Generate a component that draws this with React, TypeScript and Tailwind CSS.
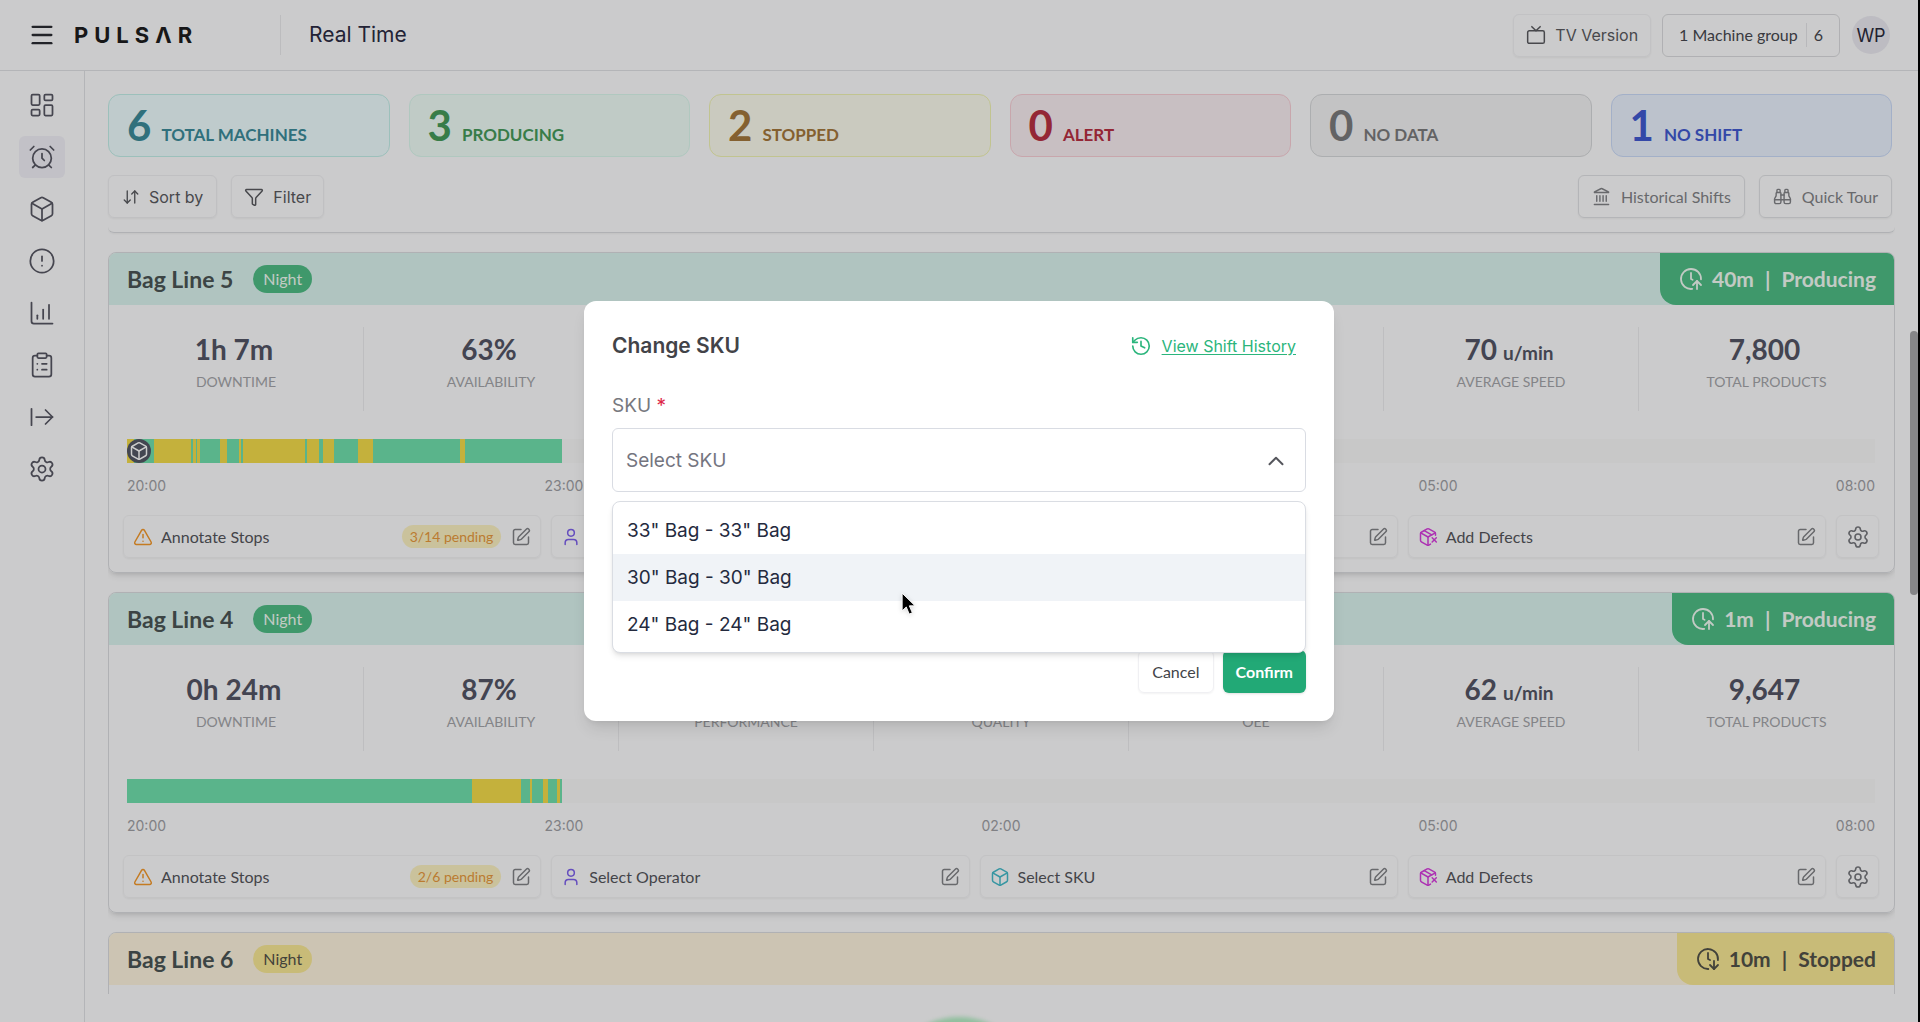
import {
    AlarmClock,
    ArrowDownUp,
    ArrowRightFromLine,
    Binoculars,
    Box,
    ChartColumnIncreasing,
    ChevronUp,
    CircleAlert,
    ClipboardList,
    ClockArrowDown,
    ClockArrowUp,
    Funnel,
    History,
    Landmark,
    LayoutDashboard,
    Menu,
    PackageX,
    Settings,
    SquarePen,
    TriangleAlert,
    Tv,
    User,
} from "lucide-react";

const inter = "font-['Inter',sans-serif]";

const navItems = [
    { label: "Dashboard", icon: LayoutDashboard },
    { label: "Real Time", icon: AlarmClock, active: true },
    { label: "Products", icon: Box },
    { label: "Alerts", icon: CircleAlert },
    { label: "Reports", icon: ChartColumnIncreasing },
    { label: "Tasks", icon: ClipboardList },
    { label: "Export", icon: ArrowRightFromLine },
    { label: "Settings", icon: Settings },
];

const totals = [
    { value: 6, label: "TOTAL MACHINES", style: "bg-[#effeff] border-[#c4f0ea] text-[#3c8d9b]" },
    { value: 3, label: "PRODUCING", style: "bg-[#f0fef8] border-[#dcfaef] text-[#469c5b]" },
    { value: 2, label: "STOPPED", style: "bg-[#fdfdef] border-[#f2f5b4] text-[#a6783c]" },
    { value: 0, label: "ALERT", style: "bg-[#fbeff3] border-[#fbd0d8] text-[#b93043]" },
    { value: 0, label: "NO DATA", style: "bg-[#f4f4f5] border-[#d8dadc] text-[#7c7c7e]" },
    { value: 1, label: "NO SHIFT", style: "bg-[#ebf3ff] border-[#ccdcfb] text-[#425ad2]" },
];

// [color, width], g = running, y = stopped. Full shift is 1748 wide
const SHIFT = 1748;

const machines: any[] = [
    {
        name: "Bag Line 5",
        time: "40m",
        status: "Producing",
        metrics: ["1h 7m", "63%", "71%", "100%", "45%", "70", "7,800"],
        pending: "3/14 pending",
        marker: true,
        segments: [
            ["y", 7], ["g", 20], ["y", 37], ["g", 2], ["y", 3], ["g", 1], ["y", 3], ["g", 20], ["y", 7], ["g", 12],
            ["y", 2], ["g", 2], ["y", 62], ["g", 2], ["y", 12], ["g", 4], ["y", 11], ["g", 24], ["y", 15], ["g", 87],
            ["y", 5], ["g", 97],
        ],
    },
    {
        name: "Bag Line 4",
        time: "1m",
        status: "Producing",
        metrics: ["0h 24m", "87%", "69%", "100%", "60%", "62", "9,647"],
        pending: "2/6 pending",
        segments: [["g", 345], ["y", 49], ["g", 9], ["y", 2], ["g", 11], ["y", 5], ["g", 9], ["y", 3], ["g", 2]],
    },
    {
        name: "Bag Line 6",
        time: "10m",
        status: "Stopped",
        metrics: ["1h 2m", "65%", "70%", "100%", "46%", "0", "6,120"],
        pending: "4/9 pending",
        segments: [["g", 400], ["y", 35]],
    },
];

const metricLabels = ["DOWNTIME", "AVAILABILITY", "PERFORMANCE", "QUALITY", "OEE", "AVERAGE SPEED", "TOTAL PRODUCTS"];

const actions = [
    { label: "Annotate Stops", icon: TriangleAlert, color: "text-[#f59a2c]" },
    { label: "Select Operator", icon: User, color: "text-[#7f62ee]" },
    { label: "Select SKU", icon: Box, color: "text-[#45bccb]" },
    { label: "Add Defects", icon: PackageX, color: "text-[#d93fe0]" },
];

const skus = ['33" Bag - 33" Bag', '30" Bag - 30" Bag', '24" Bag - 24" Bag'];

const Header = () => {
    return (
        <header className="flex h-[71px] shrink-0 items-center border-b border-[#e2e3e6] pl-[28px] pr-[28px]">
            <button aria-label="Menu" className="text-[#2b2c33]">
                <Menu size={28} strokeWidth={2} />
            </button>
            <span className="ml-[18px] w-[207px] border-r border-[#ececee] py-1 font-['Inter',sans-serif] text-[22px] font-bold leading-8 tracking-[6px] text-[#1d1d20]">
                PULSΛR
            </span>
            <h1 className={`ml-[28px] text-[21px] text-[#2c2c44] ${inter}`}>Real Time</h1>
            <div className="ml-auto flex items-center">
                <button className="flex h-[43px] items-center gap-[9px] rounded-md border border-[#f3f3f5] px-[12px] text-[16px] text-[#5a5b60] shadow-xs">
                    <Tv size={20} strokeWidth={1.8} />
                    <span className={inter}>TV Version</span>
                </button>
                <button className="ml-[11px] flex h-[43px] items-center rounded-md border border-[#dcdde0] px-[16px] text-[16px] text-[#48494f]">
                    1 Machine group
                    <span className="ml-[8px] border-l border-[#e6e6ea] pl-[7px]">6</span>
                </button>
                <span className={`ml-[12px] flex size-[38px] items-center justify-center rounded-full bg-[#edecf3] text-[18px] text-[#2a2a3c] ${inter}`}>
                    WP
                </span>
            </div>
        </header>
    );
};

const Sidebar = () => {
    return (
        <nav className="flex w-[85px] shrink-0 flex-col items-center gap-[10px] border-r border-[#e2e3e6] pt-[13px]">
            {navItems.map(({ label, icon: Icon, active }) => (
                <a
                    key={label}
                    href="#"
                    aria-label={label}
                    className={`flex h-[42px] w-[46px] items-center justify-center rounded-md text-[#585864] ${active ? "bg-[#f3f2f9]" : ""}`}
                >
                    <Icon size={28} strokeWidth={1.5} />
                </a>
            ))}
        </nav>
    );
};

const Timeline = ({ segments, marker }: any) => {
    return (
        <div className="pl-[18px] pr-[19px]">
            <div className="relative flex h-[24px] bg-[#fafafa]">
                {segments.map(([color, width]: any, i: number) => (
                    <div
                        key={i}
                        className={color === "g" ? "bg-[#71e1ae]" : "bg-[#f6de4b]"}
                        style={{ width: `${(width / SHIFT) * 100}%` }}
                    />
                ))}
                {marker && (
                    <span className="absolute left-0 top-0 flex size-[24px] items-center justify-center rounded-full bg-[#545866] text-white">
                        <Box size={20} strokeWidth={1.8} />
                    </span>
                )}
            </div>
            <div className={`mt-[13px] grid grid-cols-8 text-[14px] leading-5 text-[#a0a1a6] ${inter}`}>
                <span>20:00</span>
                <span className="col-span-2 text-center">23:00</span>
                <span className="col-span-2 text-center">02:00</span>
                <span className="col-span-2 text-center">05:00</span>
                <span className="text-right">08:00</span>
            </div>
        </div>
    );
};

const MachineCard = ({ machine }: any) => {
    const stopped = machine.status === "Stopped";
    const Clock = stopped ? ClockArrowDown : ClockArrowUp;
    const solid = stopped ? "bg-[#fbea96] text-[#53534a]" : "bg-[#4fbf86] text-[#f3fdf6]";

    return (
        <section className="h-[321px] shrink-0 overflow-hidden rounded-lg border border-[#dcdee2] shadow-md">
            <div className={`flex h-[52px] items-center pl-[18px] ${stopped ? "bg-[#fff6e0]" : "bg-[#ddf5f0]"}`}>
                <h2 className="text-[23px] font-bold text-[#4b5555]">{machine.name}</h2>
                <span className={`ml-[20px] flex h-[28px] items-center rounded-full px-[10px] text-[16px] ${solid}`}>Night</span>
                <div className={`ml-auto flex h-full items-center rounded-bl-2xl pl-[19px] pr-[18px] text-[21px] font-bold ${solid}`}>
                    <Clock size={24} strokeWidth={1.8} />
                    <span className="ml-[9px]">{machine.time}</span>
                    <span className="mx-[11px]">|</span>
                    <span>{machine.status}</span>
                </div>
            </div>
            <div className="mt-[22px] grid h-[84px] grid-cols-7 divide-x divide-[#eeeef1]">
                {metricLabels.map((label, i) => (
                    <div key={label} className="flex flex-col items-center pt-[4px]">
                        <p className="h-9 pr-1 text-[28px] font-bold leading-9 text-[#545666]">
                            {machine.metrics[i]}
                            {label === "AVERAGE SPEED" && <span className="ml-[6px] text-[19px]">u/min</span>}
                        </p>
                        <p className="mt-[5px] text-[14px] leading-5 text-[#a5a6aa]">{label}</p>
                    </div>
                ))}
            </div>
            <div className="mt-[28px]">
                <Timeline segments={machine.segments} marker={machine.marker} />
            </div>
            <div className="mt-[19px] flex gap-[10px] pl-[14px] pr-[15px]">
                {actions.map(({ label, icon: Icon, color }, i) => (
                    <button
                        key={label}
                        className="flex h-[43px] flex-1 items-center rounded-md border border-[#f4f4f6] px-[9px] text-[16px] text-[#55565c] shadow-xs"
                    >
                        <Icon size={20} strokeWidth={1.8} className={color} />
                        <span className="ml-[8px]">{label}</span>
                        {i === 0 && (
                            <span className="ml-auto rounded-full bg-[#fdf3c4] px-[8px] text-[14px] leading-[23px] text-[#ea9a3c]">
                                {machine.pending}
                            </span>
                        )}
                        <SquarePen size={20} strokeWidth={1.8} className={`text-[#838488] ${i === 0 ? "ml-[10px]" : "ml-auto"}`} />
                    </button>
                ))}
                <button
                    aria-label="Machine settings"
                    className="flex size-[43px] items-center justify-center rounded-md border border-[#f4f4f6] text-[#77787e] shadow-xs"
                >
                    <Settings size={24} strokeWidth={1.6} />
                </button>
            </div>
        </section>
    );
};

const ChangeSkuModal = () => {
    return (
        <div className="absolute inset-0 flex items-center justify-center bg-black/20">
            <div
                role="dialog"
                aria-labelledby="sku-title"
                className={`relative w-[750px] max-w-full rounded-xl bg-white px-[28px] pb-[28px] pt-[29px] shadow-lg ${inter}`}
            >
                <div className="flex items-center justify-between pr-[10px]">
                    <h2 id="sku-title" className="text-[21px] font-semibold leading-8 text-[#424348]">Change SKU</h2>
                    <a href="#" className="flex items-center gap-[10px] text-[16px] text-[#2bb57c]">
                        <History size={22} strokeWidth={1.8} />
                        <span className="underline underline-offset-2">View Shift History</span>
                    </a>
                </div>
                <label htmlFor="sku" className="mt-8 block text-[19px] leading-6 text-[#77787e]">
                    SKU <span className="text-[#dd2647]">*</span>
                </label>
                <div className="relative mt-[10px]">
                    <select
                        id="sku"
                        defaultValue=""
                        className="h-[64px] w-full appearance-none rounded-md border border-[#d9dce3] bg-white px-[13px] pt-[2px] text-[19px] text-[#74757f]"
                    >
                        <option value="">Select SKU</option>
                        {skus.map((sku) => (
                            <option key={sku}>{sku}</option>
                        ))}
                    </select>
                    <ChevronUp size={26} strokeWidth={1.8} className="pointer-events-none absolute right-[17px] top-[20px] text-[#55565c]" />
                    <ul
                        role="listbox"
                        className="absolute inset-x-0 top-[73px] rounded-lg border border-[#dadde3] bg-white pb-[4px] pt-[5px] text-[19px] leading-[47px] text-[#242a3e] shadow-md"
                    >
                        {skus.map((sku, i) => (
                            <li key={sku} role="option" aria-selected={i === 1} className={`px-[14px] ${i === 1 ? "bg-[#f0f3f7]" : ""}`}>
                                {sku}
                            </li>
                        ))}
                    </ul>
                </div>
                <div className="mt-[158px] flex justify-end gap-[9px] font-['Lato',sans-serif] text-[16px]">
                    <button className="h-[43px] rounded-md border border-[#f0f0f3] px-[13px] text-[#424348] shadow-xs">Cancel</button>
                    <button className="h-[43px] rounded-md bg-[#22a976] px-[13px] font-bold text-white shadow-sm">Confirm</button>
                </div>
                {/* mouse pointer */}
                <svg viewBox="0 0 14 21" className="absolute left-[317px] top-[291px] h-[24px] w-[16px] drop-shadow-sm">
                    <path d="M1 1v15.5l3.6-3.4 2.6 6.2 2.7-1.1-2.6-6.1h5z" fill="#000" stroke="#fff" strokeWidth="0.8" />
                </svg>
            </div>
        </div>
    );
};

const App = () => {
    return (
        <div className="relative flex h-screen flex-col overflow-hidden border-r-2 border-black bg-[#fefeff] font-['Lato',sans-serif]">
            <Header />
            <div className="flex min-h-0 flex-1">
                <Sidebar />
                <main className="flex min-w-0 flex-1 flex-col pb-[28px] pl-[23px]">
                    <div className="mr-[26px] mt-[23px] grid grid-cols-6 gap-[19px]">
                        {totals.map(({ value, label, style }) => (
                            <div key={label} className={`flex h-[63px] items-baseline gap-[10px] rounded-xl border px-[18px] font-bold ${style}`}>
                                <span className="text-[42px] leading-[60px]">{value}</span>
                                <span className="text-[17px]">{label}</span>
                            </div>
                        ))}
                    </div>
                    <div className="mb-[9px] mr-[26px] mt-[18px] flex gap-[14px] text-[16px] text-[#5a5b60]">
                        <button className={`flex h-[43px] items-center gap-[9px] rounded-md border border-[#f0f0f3] px-[13px] shadow-xs ${inter}`}>
                            <ArrowDownUp size={18} strokeWidth={1.8} />
                            Sort by
                        </button>
                        <button className={`flex h-[43px] items-center gap-[9px] rounded-md border border-[#f0f0f3] px-[12px] shadow-xs ${inter}`}>
                            <Funnel size={20} strokeWidth={1.8} />
                            Filter
                        </button>
                        <button className="ml-auto flex h-[43px] items-center gap-[10px] rounded-md border border-[#e2e3e6] px-[13px] text-[#838488] shadow-xs">
                            <Landmark size={19} strokeWidth={1.8} />
                            Historical Shifts
                        </button>
                        <button className="flex h-[43px] items-center gap-[10px] rounded-md border border-[#e2e3e6] px-[13px] text-[#838488] shadow-xs">
                            <Binoculars size={19} strokeWidth={1.8} />
                            Quick Tour
                        </button>
                    </div>
                    <div className="flex min-h-0 flex-1">
                        <div className="mr-[15px] flex min-w-0 flex-1 flex-col gap-[19px] overflow-hidden">
                            <div className="h-[6px] shrink-0 rounded-b-lg border-b border-[#dcdee2] shadow-xs" />
                            {machines.map((machine) => (
                                <MachineCard key={machine.name} machine={machine} />
                            ))}
                        </div>
                        <div className="mt-[104px] h-[264px] w-[8px] rounded-full bg-[#a8a8aa]" />
                    </div>
                </main>
            </div>
            <div className="absolute -bottom-[145px] left-1/2 size-[150px] -translate-x-1/2 rounded-full bg-[#b5efc6] blur-[2px]" />
            <ChangeSkuModal />
        </div>
    );
};

export default App;
